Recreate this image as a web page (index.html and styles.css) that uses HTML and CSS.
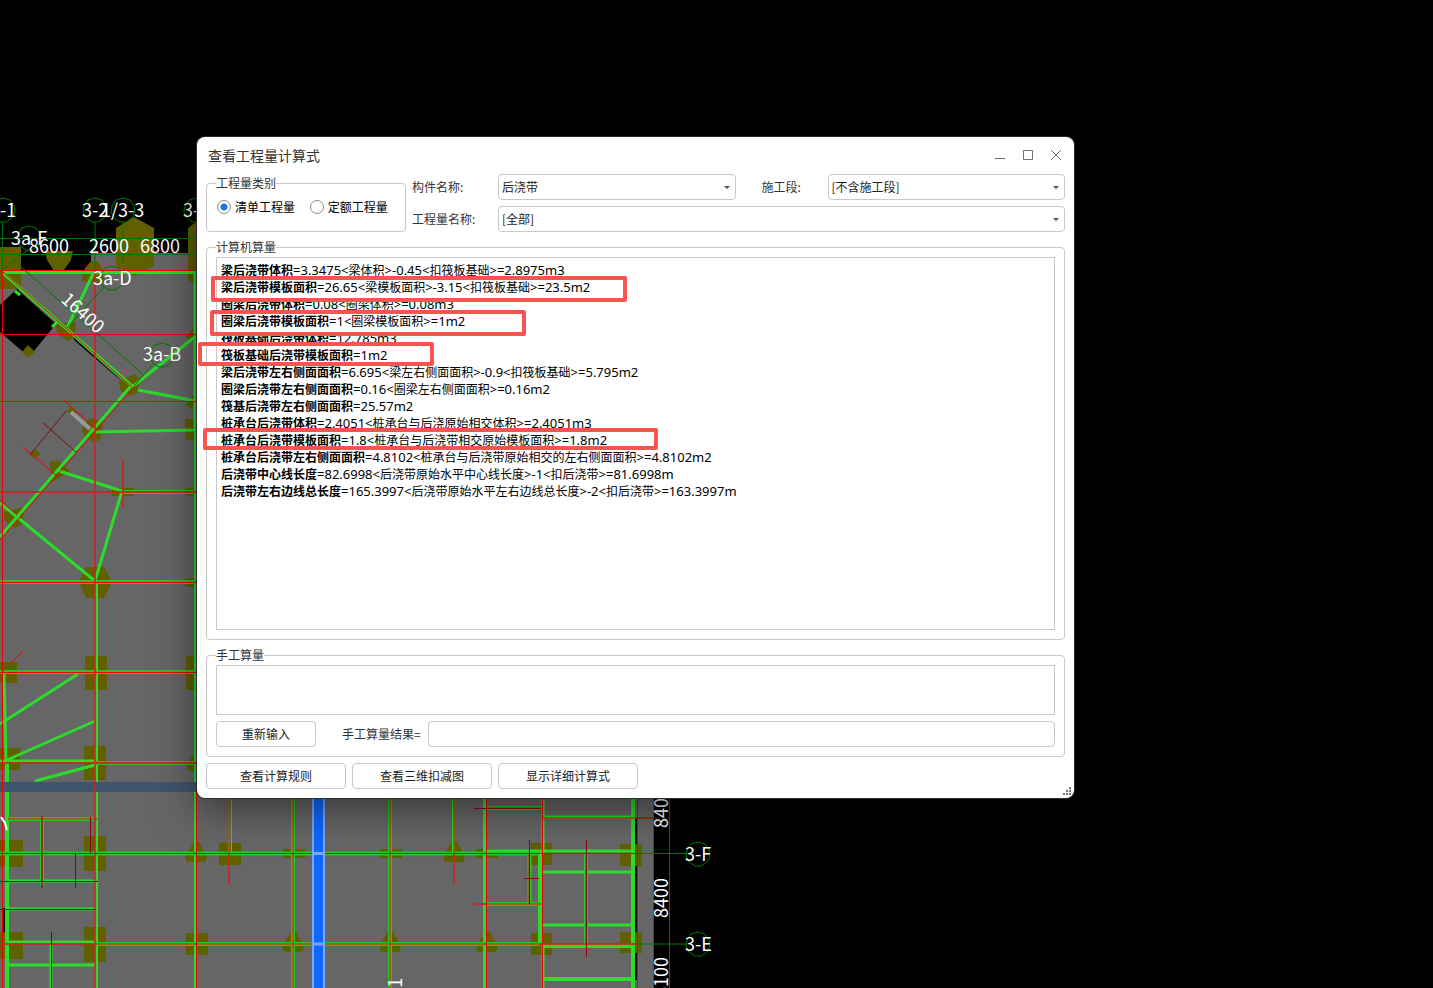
FILE: index.html
```html
<!DOCTYPE html>
<html lang="zh-CN">
<head>
<meta charset="utf-8">
<title>查看工程量计算式</title>
<link rel="stylesheet" href="styles.css">
</head>
<body>
<svg class="plan" width="1433" height="988" viewBox="0 0 1433 988" aria-hidden="true">
  <defs>
    <polygon id="axis" points="0,-12 7,-10 11,-4 12,2 9,8 3,12 -3,12 -9,8 -12,2 -11,-4 -7,-10"/>
    <path id="cap" class="pile" d="M-2,-12H3L9,-1L11,4L9,8H-9L-11,4L-9,-1Z"/>
  </defs>
  <path class="slab" d="M91,253H654V988H0V271H91Z"/>
  <path class="void" d="M0,305L17,289L56,324L29,357L0,332ZM73,337L122,381L118,378L75,341ZM635,818h3v27h-3zM634,866h4v114h-4zM3,908h3v24H3z"/>
  <g class="pile">
    <path d="M0,247H21V289H0ZM134,217L154,228V266L135,276L116,266V228ZM196,222L188,228V280L196,284ZM45,251H73L71,260L61,274H56L47,260ZM91,261H98L103,271L105,283L81,281L85,268ZM55,324L76,322L74,337L68,341L58,334ZM119,381L135,374L140,380L137,393L131,396L120,390ZM28,345L35,352L28,358L22,352ZM196,325L185,337L196,343Z"/>
    <path d="M82,428L90,418L103,422L100,440L94,442L84,437ZM50,462L57,460L70,471L52,482ZM4,512L24,507L22,524L15,528L4,520ZM35,449L41,454L34,459L30,453ZM70,406L77,412L73,416L67,411ZM112,488H134V496H112ZM185,488H196V496H185ZM185,419H196V440H185ZM79,582L86,567H104L112,582L104,598H86ZM185,578H196V587H185ZM196,392L185,405L196,410Z"/>
    <path d="M0,662H17V683H0ZM85,656H107V690H85ZM186,656H196V690H186ZM0,748H20V770H0ZM84,746H106V780H84ZM196,750L186,766L188,771H196Z"/>
    <path d="M0,840H23V867H0ZM84,836H106V871H84ZM0,932H23V959H0ZM84,927H106V962H84ZM219,843H241V865H219ZM186,933H208V955H186ZM283,849H305V858H283ZM380,849H402V858H380ZM476,849H498V858H476ZM531,843H552V865H531ZM620,844H642V866H620ZM531,933H552V955H531ZM620,932H642V953H620Z"/>
  </g>
  <use href="#cap" x="196" y="854"/><use href="#cap" x="454" y="854"/><use href="#cap" x="293" y="944"/><use href="#cap" x="390" y="944"/><use href="#cap" x="487" y="944"/>
  <path class="wall" d="M71,412L90,429"/>

  <g class="beam">
    <path d="M2,272.500H195V430M3,273L132,386M94,272L67,328M132,387L196,336M138,390L196,401M131,386L17,517L0,537M94,432L196,430M56,470L122,491L95,581M0,503L17,517L95,581M15,291l5,4M52,327l5,-5"/>
    <path d="M0,724L78,674M7,760L95,721M35,781L95,765M0,761H95M4,672L6,762"/>
    <path class="wide" d="M7,762V988M540,853V944M633,798V988M485,798V988M543,946H633M543,979H633"/>
    <path d="M96.500,582V988M195.500,430V988M543,798V853M543,944V988M8,942H95M8,965H95M543,872H633M543,925H633M51,944V988M8,909H95M8,881H95M486,851H633M543,817H633"/>
    <path class="pair" d="M122,492H196M0,582H196M0,672H196M96,763H196M8,819H97M0,853.5H540M95,944H540M42,819V885M293,798V988M390,798V988M586,853V944M529.5,853V904M486,904H541M486,808H541"/>
    <path class="thin" d="M231.500,798V853M452.500,798V853"/>
  </g>
  <rect class="strip" x="0" y="782" width="197" height="10"/>
  <path class="brown" d="M96,763H196M8,819H97M95,944H540M229,798V853M293,798V988M390,798V988M454,798V853M486,904H541M42,819V885M586,853V944M529,853V904M486,808H541M543,818H654M122,492H196"/>
  <g class="grid">
    <path d="M2.500,271V988M0,270.500H197M0,334.500H196M0,401.500H196M0,582.500H197M0,672.500H197M3,272L132,387M135,386L0,540M64,400L98,431M23,447L57,476M0,500L17,515M2,672L23,651M0,853.500H540M196.500,582V988M486.500,798V988M542.500,798V988M637.500,798V988M541,853.500H637"/>
    <path class="soft" d="M95,271V988M123,459V507M0,492H196M0,763H196M229,853V884M454,853V884M474,904H486M0,944H95M540,944H637"/>
    <path class="deep" d="M66,411L30,455M43,423L76,452M42,816V888M90.500,817V853M75.500,853V888M0,881.500H98M0,909.500H95M51.500,932V988M474,808.500H541M586.500,840V957M529.500,840V904M524,878.500H539M635,818H660"/>
  </g>
  <rect class="band" x="313" y="790" width="11" height="210"/>
  <path class="bandline" d="M312,853.500H325M312,944H325"/>

  <g class="axes">
    <path d="M0,238.500H197M0,254.500H197M2.500,222V271M95,222V271M123,222V264M12,259L144,375M28,250L0,272M104,287L67,328M153,364L134,386M653.500,798V988M669.500,798V988M637,853.500H687M637,944H687"/>
    <use href="#axis" x="3" y="210"/><use href="#axis" x="95" y="210"/><use href="#axis" x="123" y="210"/><use href="#axis" x="196" y="210"/><use href="#axis" x="29" y="238"/><use href="#axis" x="112" y="278"/><use href="#axis" x="162" y="355"/><use href="#axis" x="698" y="854"/><use href="#axis" x="698" y="944"/>
  </g>
  <path class="mark" d="M1,817L5,823L7,830"/>
  <g class="label">
    <text x="0" y="217">-1</text><text x="82" y="217">3-2</text><text x="101" y="217">1/3-3</text><text x="183" y="217">3-4</text>
    <text x="11" y="245">3a-F</text><text x="29" y="253">8600</text><text x="89" y="253">2600</text><text x="140" y="253">6800</text>
    <text x="93" y="285">3a-D</text><text x="143" y="361">3a-B</text>
    <text transform="translate(60 301) rotate(42)">16400</text>
    <text x="685" y="861">3-F</text><text x="685" y="951">3-E</text>
    <text transform="translate(668 828) rotate(-90)">8400</text>
    <text transform="translate(668 918) rotate(-90)">8400</text>
    <text transform="translate(668 997) rotate(-90)">8100</text>
    <text transform="translate(402 1004) rotate(-90)">3-1</text>
  </g>
</svg>

<main class="dialog" role="dialog" aria-labelledby="title">
  <header class="titlebar">
    <h1 id="title">查看工程量计算式</h1>
    <div class="winbtns">
      <button type="button" aria-label="最小化"><svg width="12" height="12"><path d="M1,9.500H11"/></svg></button>
      <button type="button" aria-label="最大化"><svg width="12" height="12"><path d="M1.500,1.500H10.500V10.500H1.500Z"/></svg></button>
      <button type="button" aria-label="关闭"><svg width="12" height="12"><path d="M1,1L11,11M11,1L1,11"/></svg></button>
    </div>
  </header>

  <section class="filters">
    <fieldset class="kind">
      <legend>工程量类别</legend>
      <label><input type="radio" name="kind" checked>清单工程量</label>
      <label><input type="radio" name="kind">定额工程量</label>
    </fieldset>
    <div class="fields">
      <label for="part">构件名称:</label>
      <div class="pick"><select id="part"><option>后浇带</option></select></div>
      <label for="stage" class="second">施工段:</label>
      <div class="pick"><select id="stage"><option>[不含施工段]</option></select></div>
      <label for="qty">工程量名称:</label>
      <div class="pick full"><select id="qty"><option>[全部]</option></select></div>
    </div>
  </section>

  <fieldset class="auto">
    <legend>计算机算量</legend>
    <div class="results">
      <p><b>梁后浇带体积</b><span>=3.3475&lt;</span>梁体积<span>&gt;-0.45&lt;</span>扣筏板基础<span>&gt;=2.8975m3</span></p>
      <p><b>梁后浇带模板面积</b><span>=26.65&lt;</span>梁模板面积<span>&gt;-3.15&lt;</span>扣筏板基础<span>&gt;=23.5m2</span></p>
      <p><b>圈梁后浇带体积</b><span>=0.08&lt;</span>圈梁体积<span>&gt;=0.08m3</span></p>
      <p><b>圈梁后浇带模板面积</b><span>=1&lt;</span>圈梁模板面积<span>&gt;=1m2</span></p>
      <p><b>筏板基础后浇带体积</b><span>=12.785m3</span></p>
      <p><b>筏板基础后浇带模板面积</b><span>=1m2</span></p>
      <p><b>梁后浇带左右侧面面积</b><span>=6.695&lt;</span>梁左右侧面面积<span>&gt;-0.9&lt;</span>扣筏板基础<span>&gt;=5.795m2</span></p>
      <p><b>圈梁后浇带左右侧面面积</b><span>=0.16&lt;</span>圈梁左右侧面面积<span>&gt;=0.16m2</span></p>
      <p><b>筏基后浇带左右侧面面积</b><span>=25.57m2</span></p>
      <p><b>桩承台后浇带体积</b><span>=2.4051&lt;</span>桩承台与后浇原始相交体积<span>&gt;=2.4051m3</span></p>
      <p><b>桩承台后浇带模板面积</b><span>=1.8&lt;</span>桩承台与后浇带相交原始模板面积<span>&gt;=1.8m2</span></p>
      <p><b>桩承台后浇带左右侧面面积</b><span>=4.8102&lt;</span>桩承台与后浇带原始相交的左右侧面面积<span>&gt;=4.8102m2</span></p>
      <p><b>后浇带中心线长度</b><span>=82.6998&lt;</span>后浇带原始水平中心线长度<span>&gt;-1&lt;</span>扣后浇带<span>&gt;=81.6998m</span></p>
      <p><b>后浇带左右边线总长度</b><span>=165.3997&lt;</span>后浇带原始水平左右边线总长度<span>&gt;-2&lt;</span>扣后浇带<span>&gt;=163.3997m</span></p>
    </div>
  </fieldset>

  <fieldset class="manual">
    <legend>手工算量</legend>
    <textarea aria-label="手工算量"></textarea>
    <div class="entry">
      <button type="button" class="btn small">重新输入</button>
      <label for="sum">手工算量结果=</label>
      <input id="sum" type="text">
    </div>
  </fieldset>

  <footer class="actions">
    <button type="button" class="btn">查看计算规则</button>
    <button type="button" class="btn">查看三维扣减图</button>
    <button type="button" class="btn">显示详细计算式</button>
  </footer>
  <svg class="grip" width="8" height="8" aria-hidden="true"><path d="M6,0h2v2H6zM3,3h2v2H3zM6,3h2v2H6zM0,6h2v2H0zM3,6h2v2H3zM6,6h2v2H6z"/></svg>
</main>

<div class="callout beam-form"></div>
<div class="callout ring-form"></div>
<div class="callout raft-form"></div>
<div class="callout cap-form"></div>
</body>
</html>
```

FILE: styles.css
```css
* { box-sizing: border-box; }
body {
  position: relative;
  margin: 0;
  height: 100vh;
  overflow: hidden;
  background: #000;
  color: #333;
  font: 12px/16px "Noto Sans CJK SC", sans-serif;
}

/* drawing canvas */
.plan { position: absolute; left: 0; top: 0; fill: none; }
.slab { fill: #666; }
.void { fill: #000; }
.pile { fill: #606000; }
.strip { fill: #3f556e; }
.wall { stroke: #999; stroke-width: 4; }
.beam { stroke: #2bdc2b; stroke-width: 3; }
.beam .wide { stroke-width: 4; }
.beam .pair { stroke-width: 4; stroke: #24c824; }
.beam .thin { stroke-width: 1; }
.brown { stroke: #8a6a14; stroke-width: 2; }
.grid { stroke: #f00000; stroke-width: 1; }
.grid .soft { stroke: #d02020; stroke-width: 2; stroke-opacity: .8; }
.grid .deep { stroke: #7c0c0c; }
.band { fill: #1068ff; stroke: #7aa8f8; stroke-width: 2; }
.bandline { stroke: #7aa8f8; stroke-width: 3; }
.axes { stroke: #007800; stroke-width: 1; }
.mark { stroke: #fff; stroke-width: 2; }
.label { fill: #fff; font: 18px "Noto Sans CJK SC", sans-serif; }

/* dialog */
.dialog {
  position: absolute;
  inset: 137px 359px 190px 197px;
  display: flex;
  flex-direction: column;
  padding: 0 9px 9px;
  background: #fff;
  border-radius: 8px;
  box-shadow: 0 0 0 1px #2c2c2c, 0 10px 44px rgba(0, 0, 0, .5);
}
.titlebar {
  display: flex;
  align-items: center;
  justify-content: space-between;
  height: 35px;
  margin-bottom: 2px;
  padding: 0 3px 0 2px;
}
h1 { margin: 0; font-size: 14px; line-height: 20px; font-weight: 400; }
.winbtns { display: flex; gap: 16px; }
.winbtns button { width: 12px; height: 12px; padding: 0; border: 0; background: none; }
.winbtns svg { display: block; fill: none; stroke: #707070; }

fieldset {
  min-width: 0;
  margin: 0;
  padding: 0 9px 9px;
  border: 1px solid #c8c8c8;
  border-radius: 4px;
}
legend { padding: 0; line-height: 14px; }

.filters { display: flex; gap: 6px; }
.kind {
  flex: none;
  width: 200px;
  height: 56px;
  margin-top: 2px;
  padding-top: 9px;
  white-space: nowrap;
  color: #000;
}
.kind legend { color: #333; }
.kind label { display: inline-flex; align-items: center; gap: 4px; margin-left: 1px; }
.kind label + label { margin-left: 12px; }
input[type="radio"] {
  appearance: none;
  width: 14px;
  height: 14px;
  margin: 0;
  border: 1px solid #8c8c8c;
  border-radius: 50%;
  background: #fff;
}
input[type="radio"]:checked { background: radial-gradient(circle, #1f78e0 3px, #fff 4px); }
.fields {
  flex: 1;
  display: grid;
  grid-template-columns: 86px 1fr 92px 1fr;
  grid-auto-rows: 26px;
  row-gap: 6px;
  align-items: center;
}
.second { padding-left: 26px; }
.full { grid-column: 2 / -1; }
.pick { position: relative; }
.pick::after {
  content: "";
  position: absolute;
  right: 6px;
  top: 12px;
  border: 3px solid transparent;
  border-top-color: #4a5264;
  border-bottom: 0;
}
select, input[type="text"], .btn {
  height: 26px;
  border: 1px solid #c8c8c8;
  border-radius: 4px;
  background: #fff;
  color: #222;
  font: inherit;
}
select { display: block; appearance: none; width: 100%; padding: 0 3px; }

.auto { flex: 1; display: flex; flex-direction: column; margin-top: 8px; padding-top: 3px; }
.results { flex: 1; padding: 3px 4px; border: 1px solid #c8c8c8; color: #000; overflow: hidden; }
.results p { margin: 0; line-height: 17px; height: 17px; white-space: nowrap; }
.results span { font: 13px/13px "Noto Sans", sans-serif; }

.manual { margin-top: 8px; padding-top: 3px; }
textarea {
  display: block;
  width: 100%;
  height: 50px;
  border: 1px solid #c8c8c8;
  resize: none;
  font: inherit;
}
.entry { display: flex; align-items: center; margin-top: 6px; }
.entry label { margin: 0 7px 0 26px; }
.entry input { flex: 1; min-width: 0; }
.actions { display: flex; gap: 6px; margin-top: 6px; }
.btn { width: 140px; padding: 0; }
.btn.small { width: 100px; }
.grip { position: absolute; right: 3px; bottom: 3px; fill: #707684; }

/* review marks over the result list */
.callout { position: absolute; border: 4px solid #fb5252; border-radius: 2px; }
.beam-form { left: 211px; top: 276px; width: 416px; height: 26px; }
.ring-form { left: 210px; top: 310px; width: 316px; height: 26px; }
.raft-form { left: 198px; top: 342px; width: 236px; height: 24px; }
.cap-form { left: 203px; top: 428px; width: 455px; height: 22px; }
```
